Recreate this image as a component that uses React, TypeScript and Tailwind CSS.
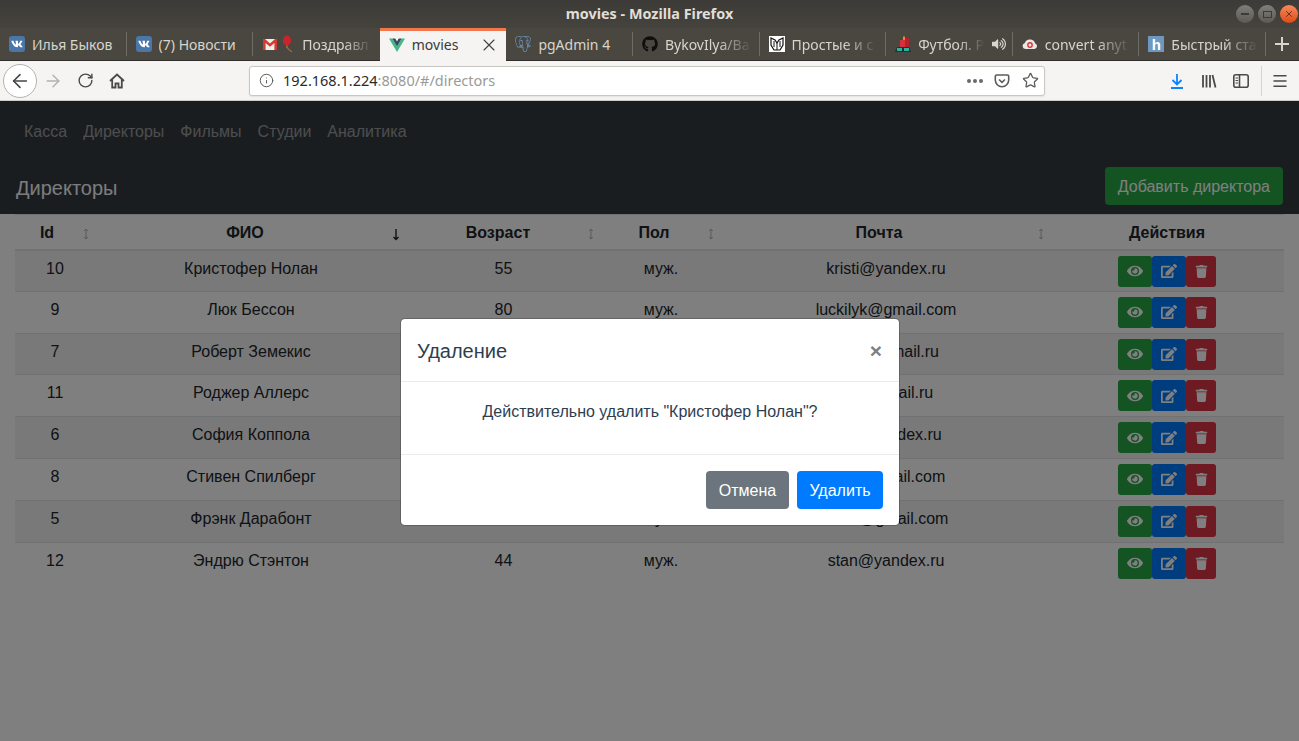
import { ReactNode } from 'react'
import { ArrowLeft, ArrowRight, Info, Menu, RotateCw, Star, X } from 'lucide-react'
import { FaEdit, FaEye, FaGithub, FaTrash, FaVk, FaVolumeUp } from 'react-icons/fa'
import { SiPostgresql } from 'react-icons/si'

const VkIcon = () => (
  <span className="flex size-4 items-center justify-center rounded-[3px] bg-[#4a76a8] text-white">
    <FaVk size={12} />
  </span>
)

const GmailIcon = () => (
  <svg width="16" height="16" viewBox="0 0 16 16">
    <rect x="1" y="3" width="14" height="11" fill="#eee" />
    <path d="M1 14V3h2l5 4.5L13 3h2v11h-2.6V7L8 10.8 3.6 7v7z" fill="#d33b2c" />
  </svg>
)

const BalloonIcon = () => (
  <svg width="14" height="18" viewBox="0 0 14 18">
    <ellipse cx="6" cy="5.5" rx="4" ry="5" fill="#c8242f" />
    <path d="M6 10.5c-1 2 1 3 2 4s2 2 3 2" stroke="#d08a3a" strokeWidth="1" fill="none" />
  </svg>
)

const VueIcon = () => (
  <svg width="16" height="16" viewBox="0 0 16 16">
    <path d="M0 1.5h3.4L8 9.6l4.6-8.1H16L8 15z" fill="#41b883" />
    <path d="M3.4 1.5h2.8L8 4.6l1.8-3.1h2.8L8 9.6z" fill="#35495e" />
  </svg>
)

const ShieldIcon = () => (
  <svg width="16" height="16" viewBox="0 0 16 16">
    <rect width="16" height="16" fill="#fff" />
    <path d="M2 2l4 2 2 3 2-3 4-2v7l-3 5H5L2 9z" fill="none" stroke="#111" strokeWidth="1.2" />
    <path d="M8 7v7M5 5v6M11 5v6" stroke="#111" strokeWidth="1" />
  </svg>
)

const SportIcon = () => (
  <svg width="16" height="16" viewBox="0 0 16 16">
    <rect x="5" y="4" width="5" height="8" fill="#d6303c" />
    <rect x="10" y="2" width="4" height="10" fill="#b5202c" />
    <rect x="8" y="0.5" width="2" height="3.5" fill="#e08a3a" />
    <path d="M0 16l2-5h12l2 5z" fill="#17343c" />
    <rect x="2" y="12" width="5" height="3" fill="#2bb39c" />
    <rect x="9" y="12" width="5" height="3" fill="#2bb39c" />
  </svg>
)

const CloudIcon = () => (
  <svg width="16" height="16" viewBox="0 0 16 16">
    <path d="M3.4 13a3 3 0 0 1-.6-5.9A5.2 5.2 0 0 1 8 3.5a5 5 0 0 1 5 3.7 3 3 0 0 1-.4 5.8z" fill="#e9e7e3" />
    <circle cx="8" cy="9" r="2.2" fill="none" stroke="#d9363e" strokeWidth="1.4" />
  </svg>
)

const HabrIcon = () => (
  <span className="flex size-4 items-center justify-center bg-[#6f98c0] font-['Liberation_Sans'] text-[15px] leading-none font-bold text-white">
    h
  </span>
)

const tabs: { icon: ReactNode; title: string; fade?: boolean; active?: boolean; sound?: boolean; extra?: ReactNode; noSep?: boolean }[] = [
  { icon: <VkIcon />, title: 'Илья Быков' },
  { icon: <VkIcon />, title: '(7) Новости' },
  { icon: <GmailIcon />, extra: <BalloonIcon />, title: 'Поздравл', fade: true, noSep: true },
  { icon: <VueIcon />, title: 'movies', active: true, noSep: true },
  { icon: <SiPostgresql size={16} color="#6fa8dc" />, title: 'pgAdmin 4' },
  { icon: <FaGithub size={16} color="#0e0e0e" />, title: 'BykovIlya/Ba', fade: true },
  { icon: <ShieldIcon />, title: 'Простые и с', fade: true },
  { icon: <SportIcon />, title: 'Футбол. Р', fade: true, sound: true },
  { icon: <CloudIcon />, title: 'convert anyt', fade: true },
  { icon: <HabrIcon />, title: 'Быстрый ста', fade: true },
]

const directors = [
  { id: 10, name: 'Кристофер Нолан', age: 55, sex: 'муж.', mail: 'kristi@yandex.ru' },
  { id: 9, name: 'Люк Бессон', age: 80, sex: 'муж.', mail: 'luckilyk@gmail.com' },
  { id: 7, name: 'Роберт Земекис', age: 66, sex: 'муж.', mail: 'robert@mail.ru' },
  { id: 11, name: 'Роджер Аллерс', age: 68, sex: 'муж.', mail: 'aller@mail.ru' },
  { id: 6, name: 'София Коппола', age: 47, sex: 'жен.', mail: 'sofi@yandex.ru' },
  { id: 8, name: 'Стивен Спилберг', age: 71, sex: 'муж.', mail: 'stev@gmail.com' },
  { id: 5, name: 'Фрэнк Дарабонт', age: 59, sex: 'муж.', mail: 'frank@gmail.com' },
  { id: 12, name: 'Эндрю Стэнтон', age: 44, sex: 'муж.', mail: 'stan@yandex.ru' },
]

const Tab = ({ tab }: { tab: (typeof tabs)[number] }) => (
  <div
    className={
      tab.active
        ? 'flex h-[33px] w-[126.6px] shrink-0 items-center gap-[7px] border-t-[3px] border-[#f2774a] bg-[#f5f4f2] pr-[10px] pb-[3px] pl-[9px] text-[#3a3a38]'
        : 'flex h-[32px] w-[126.6px] shrink-0 items-center gap-[7px] pl-[9px] text-[#d8d5cd]'
    }
  >
    <span className="flex shrink-0 items-center gap-[3px]">
      {tab.icon}
      {tab.extra}
    </span>
    <span
      className={
        tab.fade
          ? 'min-w-0 flex-1 overflow-hidden whitespace-nowrap [mask-image:linear-gradient(to_right,black_60%,transparent)]'
          : 'min-w-0 flex-1 overflow-hidden whitespace-nowrap'
      }
    >
      {tab.title}
    </span>
    {tab.sound && <FaVolumeUp size={14} color="#d8d5cd" className="-mr-[1px] shrink-0" />}
    {tab.active && <X size={20} strokeWidth={1.4} color="#444" className="-mr-[3px] shrink-0" />}
    {!tab.noSep && <span className="h-[24px] w-px shrink-0 bg-[#6f6c65]" />}
    {tab.noSep && !tab.active && <span className="w-px shrink-0" />}
  </div>
)

const TitleBar = () => (
  <div className="grid h-[28px] grid-cols-[1fr_auto_1fr] items-center bg-[linear-gradient(#3c3b37,#45433d)] font-['Noto_Sans',sans-serif]">
    <span />
    <span className="text-[14.4px] font-bold text-[#e0ded8]">movies - Mozilla Firefox</span>
    <div className="flex items-center justify-end gap-[4px] pr-[1px]">
      <span className="flex size-[18px] items-center justify-center rounded-full bg-[linear-gradient(#807e78,#5c5a54)]">
        <span className="h-[2px] w-[8px] bg-[#3c3b37]" />
      </span>
      <span className="flex size-[18px] items-center justify-center rounded-full bg-[linear-gradient(#807e78,#5c5a54)]">
        <span className="h-[7px] w-[9px] border border-[#3c3b37]" />
      </span>
      <span className="flex size-[18px] items-center justify-center rounded-full bg-[linear-gradient(#f58a5c,#df4b16)]">
        <X size={10} strokeWidth={2} color="#4a2a1c" />
      </span>
    </div>
  </div>
)

const TabBar = () => (
  <div className="flex h-[33px] items-start border-b border-[#2f2e2a] bg-[#4a4740] font-['Noto_Sans',sans-serif] text-[14px]">
    {tabs.map((t) => (
      <Tab key={t.title} tab={t} />
    ))}
    <div className="flex h-[32px] flex-1 items-center justify-center">
      <svg width="16" height="16" viewBox="0 0 16 16">
        <path d="M8 1v14M1 8h14" stroke="#d8d5cd" strokeWidth="2" />
      </svg>
    </div>
  </div>
)

const ToolBar = () => (
  <div className="flex h-[40px] items-center border-b border-[#cfcdc9] bg-[#f5f4f2] pl-[3px]">
    <span className="flex size-[34px] items-center justify-center rounded-full border border-[#b5b3af] bg-white">
      <ArrowLeft size={22} strokeWidth={1.7} color="#444" />
    </span>
    <span className="ml-[6px] flex w-[20px] justify-center">
      <ArrowRight size={22} strokeWidth={1.7} color="#b3b1ae" />
    </span>
    <span className="ml-[12px] flex w-[20px] justify-center">
      <RotateCw size={17} strokeWidth={2} color="#4a4a48" />
    </span>
    <span className="ml-[12px] flex w-[20px] justify-center">
      <svg width="16" height="16" viewBox="0 0 16 16" fill="none" stroke="#4a4a48" strokeWidth="1.8">
        <path d="M1 8l7-6.5L15 8M3.2 6.5V14.5h3.3v-4h3v4h3.3V6.5" />
      </svg>
    </span>
    <div className="ml-[122px] flex h-[30px] w-[796px] items-center rounded-[3px] border border-[#c9c7c3] bg-white pr-[5px] pl-[9px] shadow-[0_1px_2px_rgba(0,0,0,0.08)]">
      <Info size={15} strokeWidth={1.6} color="#5c5c5a" />
      <span className="ml-[9px] flex-1 font-['Noto_Sans',sans-serif] text-[14.5px] text-[#9a9a98]">
        <span className="text-[#2b2b2b]">192.168.1.224</span>:8080/#/directors
      </span>
      <span className="flex gap-[2px]">
        <span className="size-[4px] rounded-full bg-[#6a6a68]" />
        <span className="size-[4px] rounded-full bg-[#6a6a68]" />
        <span className="size-[4px] rounded-full bg-[#6a6a68]" />
      </span>
      <svg className="ml-[11px]" width="16" height="16" viewBox="0 0 16 16" fill="none" stroke="#5c5c5a" strokeWidth="1.6">
        <path d="M2.5 2h11A1.2 1.2 0 0 1 14.7 3.2V7A6.7 6.7 0 0 1 1.3 7V3.2A1.2 1.2 0 0 1 2.5 2z" />
        <path d="M5 6.5l3 2.8 3-2.8" />
      </svg>
      <Star className="ml-[12px]" size={17} strokeWidth={1.8} color="#5c5c5a" />
    </div>
    <span className="ml-[122px] flex w-[20px] justify-center">
      <svg width="16" height="16" viewBox="0 0 16 16" fill="none" stroke="#0a84ff" strokeWidth="1.8">
        <path d="M8 1v10M3.5 7L8 11.5 12.5 7M2 15h12" />
      </svg>
    </span>
    <span className="ml-[12px] flex w-[20px] justify-center">
      <svg width="16" height="16" viewBox="0 0 16 16" fill="none" stroke="#4a4a48" strokeWidth="1.8">
        <path d="M2 2v12.5M5.5 2v12.5M9 2v12.5M11.5 2l3 12.5" />
      </svg>
    </span>
    <span className="ml-[12px] flex w-[20px] justify-center">
      <svg width="16" height="14" viewBox="0 0 16 14" fill="none" stroke="#4a4a48" strokeWidth="1.6">
        <rect x="0.8" y="0.8" width="14.4" height="12.4" rx="2" />
        <path d="M6.5 1v12" />
        <path d="M2.5 4h2.5M2.5 6.5h2.5M2.5 9h2.5" strokeWidth="1" />
      </svg>
    </span>
    <span className="ml-[10px] h-[30px] w-px bg-[#d6d4d0]" />
    <span className="ml-[8px] flex w-[20px] justify-center">
      <Menu size={18} strokeWidth={2} color="#4a4a48" />
    </span>
  </div>
)

const SortIcon = ({ active, className }: { active?: boolean; className: string }) => (
  <svg
    className={`absolute top-[13px] ${className}`}
    width="8"
    height="13"
    viewBox="0 0 8 13"
    fill="none"
    stroke={active ? '#212529' : '#adb5bd'}
    strokeWidth={active ? 1.4 : 1}
  >
    {active ? (
      <path d="M4 1v10.5M1.5 9L4 11.5 6.5 9" />
    ) : (
      <path d="M4 1v10M2.2 3L4 1l1.8 2M2.2 9L4 11l1.8-2" />
    )}
  </svg>
)

const headers = [
  { title: 'Id', pad: 'pr-4', sort: 'right-[5px]' },
  { title: 'ФИО', pad: 'pr-3', sort: 'right-[7px]', active: true },
  { title: 'Возраст', pad: 'pr-[11px]', sort: 'right-[5px]' },
  { title: 'Пол', pad: 'pr-[14px]', sort: 'right-[7px]' },
  { title: 'Почта', pad: 'pr-[14px]', sort: 'right-[5px]' },
]

const DirectorsTable = () => (
  <div className="px-[15px]">
    <table className="w-full table-fixed text-center text-[16px] text-[#212529]">
      <colgroup>
        <col className="w-[80px]" />
        <col className="w-[312px]" />
        <col className="w-[193px]" />
        <col className="w-[122px]" />
        <col className="w-[328px]" />
        <col className="w-[234px]" />
      </colgroup>
      <thead>
        <tr className="h-[35px] border-t border-b-2 border-t-[#dee2e6] border-b-[#dee2e6]">
          {headers.map((h) => (
            <th key={h.title} className={`relative p-0 pt-[2px] font-bold ${h.pad}`}>
              {h.title}
              <SortIcon active={h.active} className={h.sort} />
            </th>
          ))}
          <th className="p-0 pt-[2px] font-bold">Действия</th>
        </tr>
      </thead>
      <tbody>
        {directors.map((d, i) => (
          <tr
            key={d.id}
            className={
              i % 2 === 0
                ? 'h-[41.8px] border-b border-[#dee2e6] bg-[#f2f2f2]'
                : i === directors.length - 1
                  ? 'h-[41.8px]'
                  : 'h-[41.8px] border-b border-[#dee2e6]'
            }
          >
            <td className="p-0 pt-[6px] align-top">{d.id}</td>
            <td className="p-0 pt-[6px] align-top">{d.name}</td>
            <td className="p-0 pt-[6px] align-top">{d.age}</td>
            <td className="p-0 pt-[6px] align-top">{d.sex}</td>
            <td className="p-0 pt-[6px] align-top">{d.mail}</td>
            <td className="p-0 pt-[5px] align-top">
              <div className="flex justify-center">
                <span className="flex h-[31px] w-[34px] items-center justify-center rounded-[3px] bg-[#28a745] text-white">
                  <FaEye size={16} />
                </span>
                <span className="flex h-[31px] w-[34px] items-center justify-center rounded-[3px] bg-[#007bff] text-white">
                  <FaEdit size={16} />
                </span>
                <span className="flex h-[31px] w-[30px] items-center justify-center rounded-[3px] bg-[#dc3545] text-white">
                  <FaTrash size={13} />
                </span>
              </div>
            </td>
          </tr>
        ))}
      </tbody>
    </table>
  </div>
)

const DeleteModal = () => (
  <div className="absolute inset-0 bg-black/50">
    <div className="absolute top-[217px] left-[400px] w-[500px] rounded-[5px] border border-black/20 bg-white bg-clip-padding text-[#2c3e50]">
      <div className="flex items-center justify-between border-b border-[#e9ecef] p-4">
        <h5 className="pt-[2px] text-[20px] leading-[28px] font-normal">Удаление</h5>
        <span className="mr-[1px] text-[21px] leading-none font-bold text-[#808080]">×</span>
      </div>
      <div className="border-b border-[#e9ecef] px-4 pt-[18px] pb-[30px] text-center text-[16px] leading-[24px]">
        Действительно удалить "Кристофер Нолан"?
      </div>
      <div className="flex justify-end gap-2 p-4">
        <button className="h-[38px] w-[83px] rounded-[4px] bg-[#6c757d] pt-[2px] text-[16px] text-white">Отмена</button>
        <button className="h-[38px] w-[86px] rounded-[4px] bg-[#007bff] pt-[2px] text-[16px] text-white">Удалить</button>
      </div>
    </div>
  </div>
)

const App = () => (
  <div className="flex h-[741px] w-[1299px] flex-col overflow-hidden bg-white">
    <TitleBar />
    <TabBar />
    <ToolBar />
    <div className="relative flex-1 font-['Liberation_Sans',sans-serif] text-[16px]">
      <div className="bg-[#343a40] px-4 pt-[19px] pb-[9px]">
        <nav className="flex text-white/50">
          {['Касса', 'Директоры', 'Фильмы', 'Студии', 'Аналитика'].map((n) => (
            <a key={n} className="px-2 leading-[24px]">
              {n}
            </a>
          ))}
        </nav>
        <div className="mt-[23px] flex items-center justify-between">
          <h4 className="mt-[4px] text-[20px] leading-[30px] font-normal text-[#f8f9fa]">Директоры</h4>
          <button className="h-[38px] rounded-[4px] bg-[#28a745] px-[13px] pt-[2px] text-white">Добавить директора</button>
        </div>
      </div>
      <DirectorsTable />
      <DeleteModal />
    </div>
  </div>
)

export default App
